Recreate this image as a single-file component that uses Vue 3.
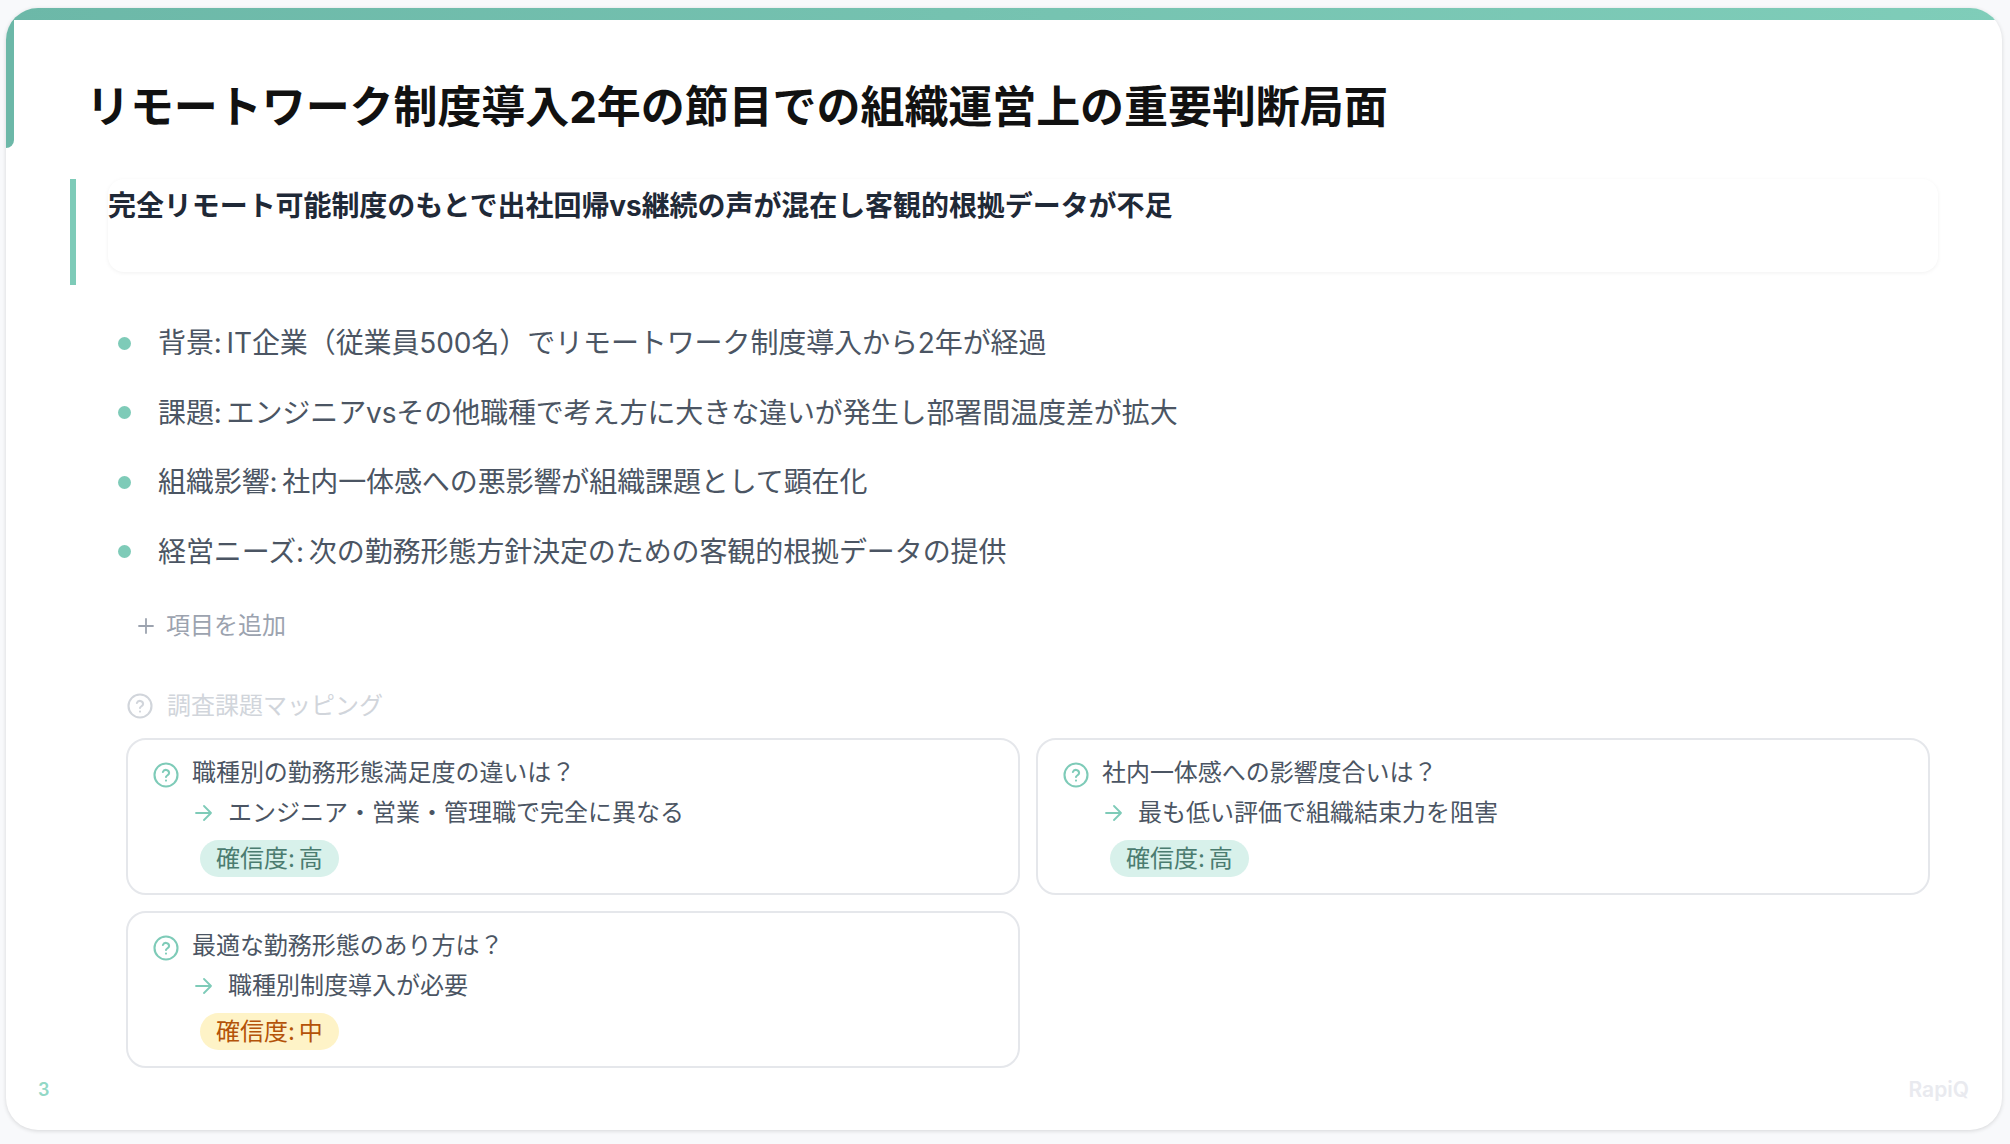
<script setup>
const bullets = [
  '背景: IT企業（従業員500名）でリモートワーク制度導入から2年が経過',
  '課題: エンジニアvsその他職種で考え方に大きな違いが発生し部署間温度差が拡大',
  '組織影響: 社内一体感への悪影響が組織課題として顕在化',
  '経営ニーズ: 次の勤務形態方針決定のための客観的根拠データの提供'
]
const cards = [
  { q: '職種別の勤務形態満足度の違いは？', a: 'エンジニア・営業・管理職で完全に異なる', level: '高', tone: 'high' },
  { q: '社内一体感への影響度合いは？', a: '最も低い評価で組織結束力を阻害', level: '高', tone: 'high' },
  { q: '最適な勤務形態のあり方は？', a: '職種別制度導入が必要', level: '中', tone: 'mid' }
]
</script>

<template>
  <div class="page">
    <main class="slide">
      <div class="topbar"></div>
      <div class="sidebar"></div>
      <h1 class="title">リモートワーク制度導入2年の節目での組織運営上の重要判断局面</h1>
      <section class="callout">
        <div class="callout-bar"></div>
        <div class="callout-card">完全リモート可能制度のもとで出社回帰vs継続の声が混在し客観的根拠データが不足</div>
      </section>
      <ul class="bullets">
        <li v-for="b in bullets" :key="b" class="bullet"><span class="dot"></span><span>{{ b }}</span></li>
      </ul>
      <div class="add">
        <svg class="plus" viewBox="0 0 16 16" fill="none" stroke="currentColor" stroke-width="1.8" stroke-linecap="round">
          <path d="M8 1v14M1 8h14" />
        </svg>
        <span>項目を追加</span>
      </div>
      <div class="map-head">
        <svg class="qicon" viewBox="0 0 26 26" fill="none" stroke="currentColor" stroke-width="2.1" stroke-linecap="round" stroke-linejoin="round">
          <circle cx="13" cy="13" r="11.5" />
          <path d="M9.9 10a3.2 3.2 0 0 1 6.2 1c0 2.1-3.1 2.7-3.1 3.9" />
          <path d="M13 18.6h.01" />
        </svg>
        <span>調査課題マッピング</span>
      </div>
      <div class="grid">
        <article v-for="c in cards" :key="c.q" class="qcard">
          <div class="qrow">
            <svg class="qicon green" viewBox="0 0 26 26" fill="none" stroke="currentColor" stroke-width="2.1" stroke-linecap="round" stroke-linejoin="round">
              <circle cx="13" cy="13" r="11.5" />
              <path d="M9.9 10a3.2 3.2 0 0 1 6.2 1c0 2.1-3.1 2.7-3.1 3.9" />
              <path d="M13 18.6h.01" />
            </svg>
            <span>{{ c.q }}</span>
          </div>
          <div class="arow">
            <svg class="arrow" viewBox="0 0 17 16" fill="none" stroke="currentColor" stroke-width="1.8" stroke-linecap="round" stroke-linejoin="round">
              <path d="M1 8h15M9 1l7 7-7 7" />
            </svg>
            <span>{{ c.a }}</span>
          </div>
          <span class="pill" :class="c.tone">確信度: {{ c.level }}</span>
        </article>
      </div>
      <footer class="foot"><span class="num">3</span><span class="brand">RapiQ</span></footer>
    </main>
  </div>
</template>

<style>
html, body { margin: 0; background: #f8f9fb; }
</style>

<style scoped>
.page {
  width: 2010px;
  height: 1144px;
  padding: 8px 8px 14px 6px;
  box-sizing: border-box;
  background: #f8f9fb;
  font-family: Inter, "Noto Sans CJK JP", sans-serif;
  word-spacing: -3px;
}
.slide {
  position: relative;
  height: 100%;
  box-sizing: border-box;
  background: #fff;
  border-radius: 32px;
  overflow: hidden;
  box-shadow: 0 1px 4px rgba(0, 0, 0, 0.14);
  padding: 0 0 0 64px;
}
.topbar {
  position: absolute;
  inset: 0 0 auto 0;
  height: 12px;
  background: linear-gradient(90deg, #6cb8a8, #7fcdb9);
}
.sidebar {
  position: absolute;
  left: 0;
  top: 12px;
  width: 8px;
  height: 128px;
  border-radius: 0 0 8px 0;
  background: #6cb8a8;
}
.title {
  margin: 0;
  padding: 69px 0 0 16px;
  font-size: 44px;
  line-height: 60px;
  font-weight: 700;
  letter-spacing: -0.07px;
  color: #111;
}
.callout {
  display: flex;
  margin-top: 42px;
}
.callout-bar {
  width: 6px;
  height: 106px;
  background: #7ecbb8;
}
.callout-card {
  width: 1830px;
  height: 93px;
  margin-left: 32px;
  border-radius: 16px;
  box-shadow: 0 1px 4px rgba(0, 0, 0, 0.06);
  font-size: 28px;
  line-height: 54px;
  font-weight: 700;
  letter-spacing: -0.07px;
  color: #1f2937;
  box-sizing: border-box;
}
.bullets {
  list-style: none;
  margin: 38px 0 0;
  padding: 0 0 0 48px;
  display: flex;
  flex-direction: column;
  gap: 29.6px;
}
.bullet {
  display: flex;
  align-items: center;
  font-size: 28px;
  line-height: 40px;
  letter-spacing: -0.1px;
  color: #4b5563;
}
.dot {
  width: 13px;
  height: 13px;
  margin-right: 27px;
  border-radius: 50%;
  background: #7ecbb8;
}
.add {
  display: flex;
  align-items: center;
  gap: 12px;
  margin: 36px 0 0 68px;
  font-size: 24px;
  line-height: 36px;
  color: #9ca3af;
}
.plus {
  width: 16px;
  height: 16px;
}
.map-head {
  display: flex;
  align-items: center;
  gap: 14px;
  margin: 44px 0 0 57px;
  font-size: 24px;
  line-height: 36px;
  color: #d1d5db;
}
.qicon {
  width: 26px;
  height: 26px;
  flex: none;
}
.green { color: #7ecbb8; }
.grid {
  display: grid;
  grid-template-columns: 894px 894px;
  gap: 16px;
  margin: 14px 0 0 56px;
}
.qcard {
  box-sizing: border-box;
  height: 157px;
  border: 2px solid #e5e7eb;
  border-radius: 20px;
  padding: 16px 0 0 25px;
}
.qrow {
  display: flex;
  align-items: center;
  gap: 13px;
  font-size: 24px;
  line-height: 34px;
  letter-spacing: -0.05px;
  color: #4b5563;
}
.qrow .qicon { position: relative; top: 2px; }
.arow {
  display: flex;
  align-items: center;
  margin: 6px 0 0 42px;
  font-size: 24px;
  line-height: 34px;
  color: #4b5563;
}
.arrow {
  width: 17px;
  height: 16px;
  margin-right: 16px;
  color: #7ecbb8;
}
.pill {
  display: inline-block;
  margin: 10px 0 0 47px;
  padding: 0 16px;
  height: 37px;
  line-height: 37px;
  border-radius: 19px;
  font-size: 24px;
}
.high { background: #d8f1eb; color: #4b7c70; }
.mid { background: #fef3c7; color: #b45309; }
.foot {
  position: absolute;
  left: 32px;
  right: 33px;
  bottom: 28px;
  display: flex;
  justify-content: space-between;
  align-items: center;
  font-size: 18px;
  font-weight: 600;
  line-height: 24px;
}
.num { color: #92d8c6; }
.brand { color: #e9eaef; font-size: 21px; }
</style>
